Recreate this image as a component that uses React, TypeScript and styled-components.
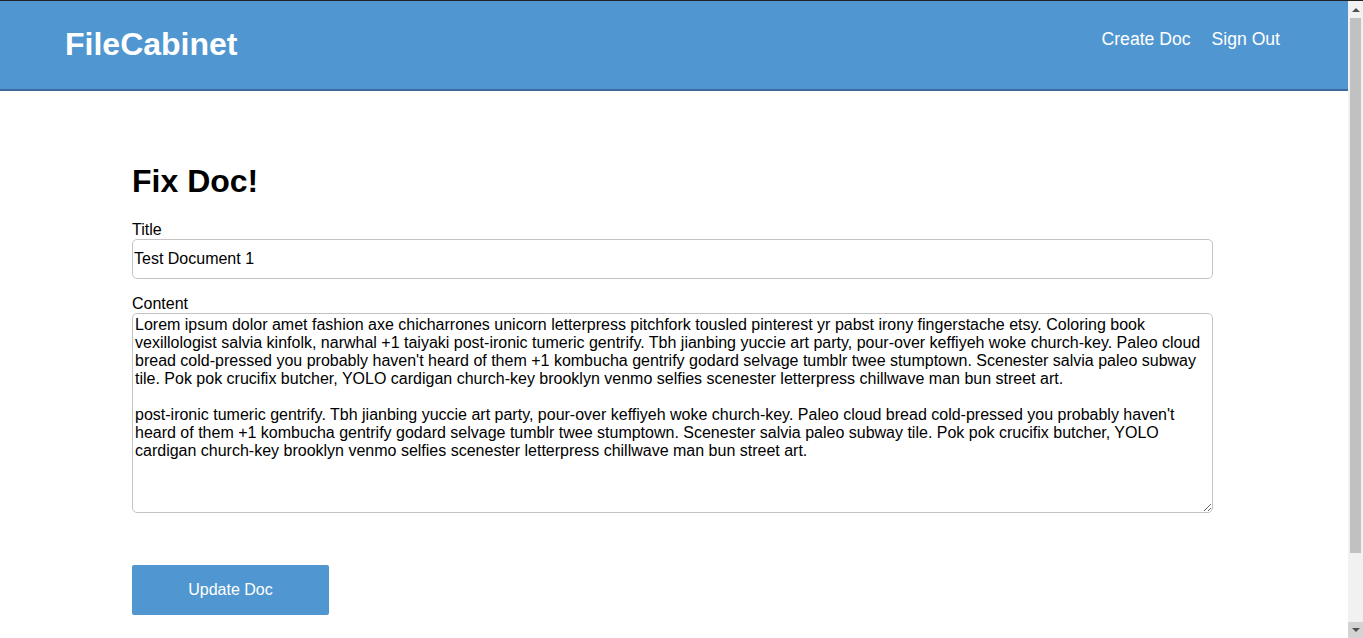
import React from "react";
import styled, { createGlobalStyle } from "styled-components";

const GlobalStyle = createGlobalStyle`
  html, body {
    margin: 0;
    padding: 0;
    background: #ffffff;
    font-family: "Liberation Sans", Arial, sans-serif;
    color: #000;
  }
  * { box-sizing: border-box; }
`;

const Page = styled.div`
  margin-right: 15px;
`;

const Header = styled.header`
  display: flex;
  justify-content: space-between;
  align-items: flex-start;
  height: 91px;
  padding: 0 68px 0 65px;
  background: #5097d1;
  border-top: 1px solid #222222;
  border-bottom: 2px solid #3d6b9e;
`;

const Logo = styled.a`
  padding-top: 25px;
  font-size: 32px;
  font-weight: 700;
  color: #ffffff;
  text-decoration: none;
  line-height: normal;
`;

const Nav = styled.nav`
  display: flex;
  gap: 21px;
  padding-top: 28px;
`;

const NavLink = styled.a`
  font-size: 17.6px;
  color: #ffffff;
  text-decoration: none;
  line-height: normal;
`;

const Main = styled.main`
  padding: 72px 135px 105px 132px;
`;

const Heading = styled.h1`
  margin: 0 0 21px;
  font-size: 32px;
  font-weight: 700;
  line-height: normal;
`;

const Form = styled.form`
  display: flex;
  flex-direction: column;
`;

const Label = styled.label`
  display: block;
  font-size: 16px;
  line-height: normal;
`;

const TextInput = styled.input`
  display: block;
  width: 100%;
  height: 40px;
  margin: 0 0 16px;
  padding: 0 1px;
  border: 1px solid #c4c4c4;
  border-radius: 5px;
  font-family: "Liberation Sans", Arial, sans-serif;
  font-size: 16px;
  color: #000;
  background: #fff;
  outline: none;
`;

const TextArea = styled.textarea`
  display: block;
  width: 100%;
  height: 200px;
  margin: 0;
  padding: 2px;
  border: 1px solid #c4c4c4;
  border-radius: 5px;
  font-family: "Liberation Sans", Arial, sans-serif;
  font-size: 16px;
  line-height: normal;
  color: #000;
  background: #fff;
  outline: none;
  resize: vertical;
`;

const SubmitButton = styled.button`
  align-self: flex-start;
  margin-top: 52px;
  width: 197px;
  height: 50px;
  border: none;
  border-radius: 2px;
  background: #5097d1;
  color: #ffffff;
  font-family: "Liberation Sans", Arial, sans-serif;
  font-size: 16px;
  cursor: pointer;
`;

/* Imitation of the browser's vertical scrollbar, laid over the right edge */
const ScrollBar = styled.div`
  position: fixed;
  top: 0;
  right: 0;
  width: 15px;
  height: 100vh;
  display: flex;
  flex-direction: column;
  background: #f1f1f1;
  border-top: 1px solid #222222;
`;

const ArrowButton = styled.div<{ $down?: boolean; $height: number }>`
  flex: 0 0 ${(p) => p.$height}px;
  display: flex;
  align-items: center;
  justify-content: center;
  background: ${(p) => (p.$down ? "#d3d3d3" : "#f1f1f1")};
  &::after {
    content: "";
    width: 0;
    height: 0;
    border-left: 4px solid transparent;
    border-right: 4px solid transparent;
    ${(p) =>
      p.$down
        ? "border-top: 4px solid #505050;"
        : "border-bottom: 4px solid #505050;"}
  }
`;

const Track = styled.div`
  flex: 1;
  display: flex;
  flex-direction: column;
  padding: 0 2px;
`;

const Thumb = styled.div`
  height: 535px;
  background: #c1c1c1;
`;

const content =
  "Lorem ipsum dolor amet fashion axe chicharrones unicorn letterpress pitchfork tousled pinterest yr pabst irony fingerstache etsy. Coloring book vexillologist salvia kinfolk, narwhal +1 taiyaki post-ironic tumeric gentrify. Tbh jianbing yuccie art party, pour-over keffiyeh woke church-key. Paleo cloud bread cold-pressed you probably haven't heard of them +1 kombucha gentrify godard selvage tumblr twee stumptown. Scenester salvia paleo subway tile. Pok pok crucifix butcher, YOLO cardigan church-key brooklyn venmo selfies scenester letterpress chillwave man bun street art.\n\npost-ironic tumeric gentrify. Tbh jianbing yuccie art party, pour-over keffiyeh woke church-key. Paleo cloud bread cold-pressed you probably haven't heard of them +1 kombucha gentrify godard selvage tumblr twee stumptown. Scenester salvia paleo subway tile. Pok pok crucifix butcher, YOLO cardigan church-key brooklyn venmo selfies scenester letterpress chillwave man bun street art.";

export default function App() {
  return (
    <>
      <GlobalStyle />
      <Page>
        <Header>
          <Logo href="#">FileCabinet</Logo>
          <Nav>
            <NavLink href="#">Create Doc</NavLink>
            <NavLink href="#">Sign Out</NavLink>
          </Nav>
        </Header>
        <Main>
          <Heading>Fix Doc!</Heading>
          <Form onSubmit={(e) => e.preventDefault()}>
            <Label htmlFor="title">Title</Label>
            <TextInput id="title" type="text" defaultValue="Test Document 1" />
            <Label htmlFor="content">Content</Label>
            <TextArea id="content" defaultValue={content} />
            <SubmitButton type="submit">Update Doc</SubmitButton>
          </Form>
        </Main>
      </Page>
      <ScrollBar>
        <ArrowButton $height={17} />
        <Track>
          <Thumb />
        </Track>
        <ArrowButton $down $height={16} />
      </ScrollBar>
    </>
  );
}
